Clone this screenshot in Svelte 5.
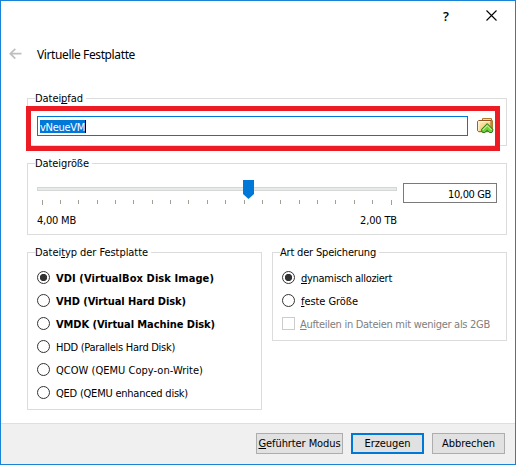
<script>
  const types = [
    { text: 'VDI (VirtualBox Disk Image)', bold: true, checked: true, width: 158 },
    { text: 'VHD (Virtual Hard Disk)', bold: true, width: 130 },
    { text: 'VMDK (Virtual Machine Disk)', bold: true, width: 159 },
    { text: 'HDD (Parallels Hard Disk)', width: 119 },
    { text: 'QCOW (QEMU Copy-on-Write)', width: 147 },
    { text: 'QED (QEMU enhanced disk)', width: 132 }
  ];
  const ticks = [42, 60, 78, 97, 115, 133, 152, 170, 188, 207, 225, 244, 262, 280, 299, 317, 335, 354, 372, 391];

  // Spreads the letters so that a label takes up its intended width.
  function fit(node, width) {
    const natural = node.getBoundingClientRect().width;
    node.style.letterSpacing = `${(width - natural) / node.textContent.length}px`;
  }
</script>

<div class="dialog">
  <div class="titlebar">
    <span class="help">?</span>
    <svg class="close" width="11" height="11" viewBox="0 0 11 11"><path d="M.5.5l10 10M10.500.5l-10 10" stroke="#000" stroke-width="1.1" fill="none" /></svg>
  </div>
  <header>
    <svg width="13" height="12" viewBox="0 0 13 12"><path d="M6.300.8L1.300 5.700l5 5M1.500 5.700H12.500" fill="none" stroke="#bfbfbf" stroke-width="1.7" /></svg>
    <h1><span use:fit={98}>Virtuelle Festplatte</span></h1>
  </header>

  <main>
    <section class="group path">
      <h2><span use:fit={48}>Datei<u>p</u>fad</span></h2>
      <div class="input"><span class="selected"><span use:fit={45}>vNeueVM</span></span><i></i></div>
      <svg class="folder" width="18" height="16" viewBox="0 0 18 16">
        <defs>
          <linearGradient id="paper" x2="1" y2="1"><stop stop-color="#fff3c8" /><stop offset="1" stop-color="#efb548" /></linearGradient>
        </defs>
        <path d="M5.500 2.500V.6h9v1.900h.9v10H3.500" fill="#ffe5a0" stroke="#a9711b" />
        <path d="M.6 3.500l1-1h12.500v11.200H1.600l-1-1z" fill="url(#paper)" stroke="#984f21" />
        <path d="M1.800 3.700h11.300M1.800 4v8.500" stroke="#fffbe6" fill="none" />
        <path d="M10.200 5.600L4.600 11.300q-.3 2 .9 3.200h2.300l2.400-2.300 2.400 2.300h2.300q1.200-1.200.9-3.200z" fill="#6fd13a" stroke="#2e7817" />
        <path d="M5.700 12.100L10.200 7.500l4.500 4.600" stroke="#d5ffa8" fill="none" />
      </svg>
      <div class="highlight"></div>
    </section>

    <section class="group size">
      <h2><span use:fit={54}>Dateigröße</span></h2>
      <div class="slider">
        <div class="groove"></div>
        <svg class="ticks" width="360" height="5" shape-rendering="crispEdges">
          {#each ticks as tick, i}
            <rect x={tick - 37} y="0" width="1" height={i === 0 || i === 19 ? 5 : 4} fill="#a0a096" />
          {/each}
        </svg>
        <svg class="thumb" width="11" height="19"><path d="M0 0h11v14l-5.500 5L0 14z" fill="#0078d7" /></svg>
        <div class="range"><span use:fit={39}>4,00 MB</span><span use:fit={37}>2,00 TB</span></div>
      </div>
      <div class="value"><span use:fit={43}>10,00 GB</span></div>
    </section>

    <div class="columns">
      <section class="group types">
        <h2><span use:fit={113}>Datei<u>t</u>yp der Festplatte</span></h2>
        {#each types as type}
          <div class="option">
            <span class="radio" class:checked={type.checked}></span>
            <span class="label" class:bold={type.bold} use:fit={type.width}>{type.text}</span>
          </div>
        {/each}
      </section>
      <section class="group storage">
        <h2><span use:fit={96}>Art der Speicherung</span></h2>
        <div class="option"><span class="radio checked"></span><span class="label" use:fit={91}><u>d</u>ynamisch alloziert</span></div>
        <div class="option"><span class="radio"></span><span class="label" use:fit={57}><u>f</u>este Größe</span></div>
        <div class="option disabled"><span class="check"></span><span class="label" use:fit={190}><u>A</u>ufteilen in Dateien mit weniger als 2GB</span></div>
      </section>
    </div>
  </main>

  <footer>
    <button class="wide"><span use:fit={82}><u>G</u>eführter Modus</span></button>
    <button class="primary"><span use:fit={46}>Erzeugen</span></button>
    <button><span use:fit={53}>Abbrechen</span></button>
  </footer>
</div>

<style>
  :global(body) { margin: 0; overflow: hidden; }
  .dialog, .dialog * { box-sizing: border-box; }
  .dialog {
    width: 516px; height: 465px; background: #fff; color: #000;
    border: 1px solid #1883d7; display: flex; flex-direction: column;
    font: 11px/14px "DejaVu Sans Condensed", "DejaVu Sans", sans-serif;
    white-space: nowrap;
  }
  u { text-decoration: underline; text-decoration-thickness: 1px; text-underline-offset: 1px; text-decoration-skip-ink: none; }
  svg { display: block; flex: none; }
  .titlebar { height: 29px; display: flex; justify-content: flex-end; padding: 9px 18px 0 0; }
  .help { font: 600 13px/12px "Open Sans", sans-serif; width: 7px; margin-right: 36px; }
  header { height: 68px; display: flex; padding: 17px 0 0 8px; }
  h1 { margin: 0 0 0 15px; font: 12px/16px "Noto Sans", sans-serif; }
  header svg { margin-top: 1px; }
  main { padding: 0 8px 0 26px; height: 325px; }
  .group { position: relative; border: 1px solid #dcdcdc; }
  h2 { position: absolute; left: 7px; top: -7px; margin: 0; padding-right: 3px; background: #fff; font: inherit; }
  .path { height: 48px; display: flex; padding: 17px 0 0 9px; }
  .input { width: 431px; height: 20px; border: 1px solid #0078d7; display: flex; align-items: center; padding-left: 2px; }
  .selected { width: 45px; height: 13px; background: #0078d7; color: #fff; line-height: 15px; }
  .input i { width: 1px; height: 13px; background: #000; }
  .folder { margin: 2px 0 0 9px; }
  .highlight { position: absolute; left: -2px; top: 7px; width: 474px; height: 45px; border: 5px solid #ed1c24; z-index: 2; }
  .size { height: 72px; margin-top: 17px; display: flex; padding-left: 9px; }
  .slider { position: relative; width: 360px; padding-top: 23px; }
  .groove { height: 4px; border: 1px solid #d6d6d6; background: #e7eaea; }
  .ticks { margin-top: 9px; }
  .thumb { position: absolute; left: 206px; top: 16px; }
  .range { display: flex; justify-content: space-between; margin-top: 9px; }
  .value { width: 94px; height: 20px; margin: 19px 0 0 6px; border: 1px solid #7a7a7a; text-align: right; padding: 4px 5px 0 0; line-height: 14px; }
  .columns { display: flex; gap: 10px; margin-top: 17px; align-items: flex-start; }
  .types { width: 235px; height: 158px; padding: 13px 0 0 9px; }
  .storage { width: 235px; height: 89px; padding: 13px 0 0 9px; }
  .option { height: 23px; display: flex; align-items: center; }
  .label { padding-top: 2px; }
  .radio, .check { width: 13px; height: 13px; border: 1px solid #333; border-radius: 50%; flex: none; margin-right: 6px; }
  .checked { background: radial-gradient(circle, #333 0 3.400px, #fff 3.900px); }
  .check { border-radius: 0; border-color: #ccc; margin-right: 5px; }
  .disabled { color: #808080; }
  .bold { font-weight: bold; }
  footer { flex: 1; border-top: 1px solid #dfdfdf; background: #f0f0f0; display: flex; justify-content: flex-end; gap: 8px; padding: 9px 10px 0 0; }
  button { width: 73px; height: 21px; padding: 1px 0 0; border: 1px solid #adadad; border-radius: 0; background: #e1e1e1; font: inherit; color: #000; }
  .wide { width: 87px; }
  .primary { border: 2px solid #0078d7; }
</style>
